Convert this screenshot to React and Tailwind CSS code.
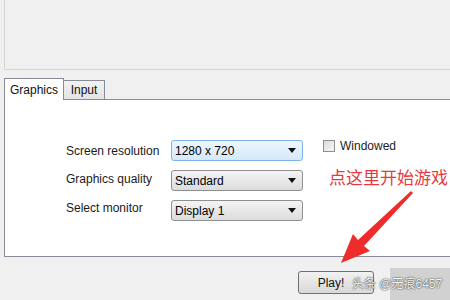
import React from "react";

const Select = ({ value, focused }) => (
  <div
    className={
      "w-[132px] h-[21px] rounded-[3px] border flex items-center justify-between pl-[3px] pr-[6px] text-[12px] text-black " +
      (focused
        ? "border-[#7eb4ea] bg-gradient-to-b from-[#eef6fd] to-[#d5e9f7]"
        : "border-[#8e8f8f] bg-gradient-to-b from-[#f4f4f4] to-[#dcdcdc]")
    }
  >
    <span>{value}</span>
    <svg width="8" height="5" viewBox="0 0 8 5">
      <polygon points="0,0 8,0 4,5" fill="#111" />
    </svg>
  </div>
);

const Row = ({ label, value, focused, labelOffset }) => (
  <div className="flex items-center h-[21px]">
    <div className={"w-[105px] text-[12px] text-[#1a1a1a] " + labelOffset}>{label}</div>
    <Select value={value} focused={focused} />
  </div>
);

export default function App() {
  return (
    <div
      className="relative w-[450px] h-[300px] bg-[#f0f0f0] overflow-hidden flex flex-col"
      style={{ fontFamily: '"Liberation Sans", "Noto Sans CJK SC", sans-serif' }}
    >
      <div className="ml-[4px] h-[70px] shrink-0 border-l border-b border-[#d4d4d4] rounded-bl-[2px]" />

      <div className="flex items-end ml-[4px] mt-[7px] h-[22px] shrink-0">
        <div className="h-[22px] w-[60px] bg-white border border-b-0 border-[#898c95] flex items-center justify-center text-[12px] text-[#111] relative z-10 -mb-px">
          Graphics
        </div>
        <div className="h-[19px] w-[41px] bg-gradient-to-b from-[#f2f2f2] to-[#e3e3e3] border border-l-0 border-b-0 border-[#898c95] flex items-center justify-center text-[12px] text-[#111]">
          Input
        </div>
      </div>

      <div className="ml-[4px] h-[158px] shrink-0 bg-white border border-r-0 border-[#898c95] flex pt-[40px] pl-[61px]">
        <div className="flex flex-col gap-[9px]">
          <Row label="Screen resolution" value="1280 x 720" focused labelOffset="" />
          <Row label="Graphics quality" value="Standard" labelOffset="-mt-[4px]" />
          <Row label="Select monitor" value="Display 1" labelOffset="-mt-[5px]" />
        </div>
        <div className="ml-[20px] flex items-start gap-[5px] -mt-[1px]">
          <div className="w-[12px] h-[12px] border border-[#8f8f8f] bg-gradient-to-br from-[#dcdcdc] to-[#f6f6f6] mt-[1px]" />
          <span className="text-[12px] text-[#222] leading-[14px]">Windowed</span>
        </div>
      </div>

      <div className="flex justify-start pl-[298px] mt-[14px]">
        <div className="w-[76px] h-[23px] rounded-[3px] border border-[#707070] bg-gradient-to-b from-[#f2f2f2] to-[#d8d8d8] flex items-center justify-center text-[12px] text-[#111] pr-[10px]">
          Play!
        </div>
      </div>

      <div className="absolute left-[329px] top-[168px] text-[17px] leading-[22px] text-[#e8383d] whitespace-nowrap">
        点这里开始游戏
      </div>

      <svg className="absolute left-0 top-0" width="450" height="300" viewBox="0 0 450 300">
        <polygon
          points="413,193 364,246 370,251 341,263 353,234 358,240 411,191"
          fill="#ee2c2c"
        />
      </svg>

      <div className="absolute left-[390px] top-[268px] w-[60px] h-[32px] bg-[#bdbdbd]/60" />
      <div
        className="absolute left-[352px] top-[276px] text-[12px] leading-[16px] text-[#f4f4f4] whitespace-nowrap"
        style={{ textShadow: "0 0 2px #444, 0 0 1px #444" }}
      >
        头条 @无痕6457
      </div>
    </div>
  );
}
